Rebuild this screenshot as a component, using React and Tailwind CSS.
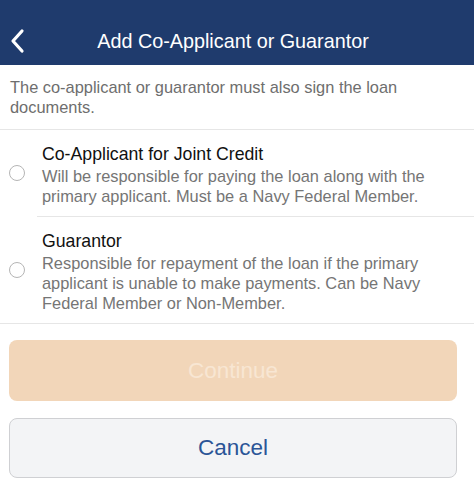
import React, { useState } from 'react';

const options = [
  {
    id: 'joint',
    title: 'Co-Applicant for Joint Credit',
    desc: 'Will be responsible for paying the loan along with the primary applicant. Must be a Navy Federal Member.',
  },
  {
    id: 'guarantor',
    title: 'Guarantor',
    desc: 'Responsible for repayment of the loan if the primary applicant is unable to make payments. Can be Navy Federal Member or Non-Member.',
  },
];

export default function App() {
  const [selected, setSelected] = useState(null);

  return (
    <div className="w-[474px] h-[486px] bg-white overflow-hidden" style={{ fontFamily: '"Liberation Sans", Arial, sans-serif' }}>
      {/* Header */}
      <div className="relative h-[65px] bg-[#1f3b6d] flex items-center justify-center">
        <button type="button" className="absolute left-[9px] top-[28px] text-white">
          <svg width="16" height="26" viewBox="0 0 16 26" fill="none">
            <path d="M13 3 L4 13 L13 23" stroke="white" strokeWidth="3.2" strokeLinecap="round" strokeLinejoin="round" />
          </svg>
        </button>
        <h1 className="text-white text-[19.8px] pt-[18px] pr-[8px]">Add Co-Applicant or Guarantor</h1>
      </div>

      {/* Intro */}
      <p className="px-[10px] pt-[12px] pb-[12px] text-[16.4px] leading-[20px] text-[#6e6e6e] border-b border-[#e6e6e6]">
        The co-applicant or guarantor must also sign the loan documents.
      </p>

      {/* Options */}
      <div className="border-b border-[#e6e6e6]">
        {options.map((opt, i) => (
          <div key={opt.id}>
            <label
              className="flex items-center cursor-pointer"
              onClick={() => setSelected(opt.id)}
            >
              <span className="w-[42px] shrink-0 flex pl-[9px]">
                <span
                  className={
                    'w-[16px] h-[16px] rounded-full border ' +
                    (selected === opt.id ? 'border-[#1f3b6d] bg-[#1f3b6d]' : 'border-[#b5b5b5]')
                  }
                />
              </span>
              <span className="flex-1 pt-[12px] pb-[10px] pr-[10px]">
                <span className="block text-[17.7px] leading-[24px] text-[#111]">{opt.title}</span>
                <span className="block text-[16.4px] leading-[20px] text-[#757575]">{opt.desc}</span>
              </span>
            </label>
            {i === 0 && <div className="ml-[37px] border-b border-[#e6e6e6]" />}
          </div>
        ))}
      </div>

      {/* Buttons */}
      <div className="px-[9px] pt-[16px] flex flex-col gap-[17px] w-[466px]">
        <button
          type="button"
          disabled={!selected}
          className={
            'h-[61px] rounded-[8px] text-[22.5px] ' +
            (selected ? 'bg-[#e8893a] text-white' : 'bg-[#f2d6b9] text-[#f8e6d3]')
          }
        >
          Continue
        </button>
        <button
          type="button"
          className="h-[60px] rounded-[8px] bg-[#f3f4f6] border border-[#cfd0d3] text-[22.5px] text-[#2b5597]"
        >
          Cancel
        </button>
      </div>
    </div>
  );
}
